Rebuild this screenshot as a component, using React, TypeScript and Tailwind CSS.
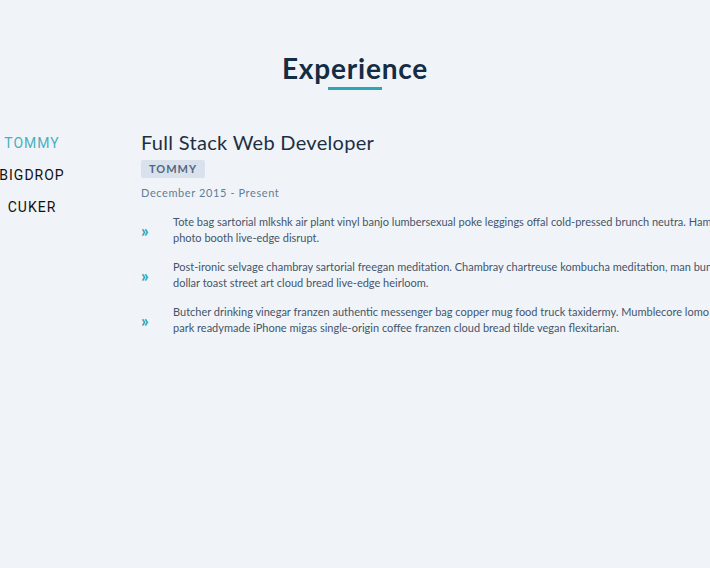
import React from 'react';

const companies = ['TOMMY', 'BIGDROP', 'CUKER'];

const points: string[][] = [
  [
    'Tote bag sartorial mlkshk air plant vinyl banjo lumbersexual poke leggings offal cold-pressed brunch neutra. Hammock',
    'photo booth live-edge disrupt.',
  ],
  [
    'Post-ironic selvage chambray sartorial freegan meditation. Chambray chartreuse kombucha meditation, man bun four',
    'dollar toast street art cloud bread live-edge heirloom.',
  ],
  [
    'Butcher drinking vinegar franzen authentic messenger bag copper mug food truck taxidermy. Mumblecore lomo echo',
    'park readymade iPhone migas single-origin coffee franzen cloud bread tilde vegan flexitarian.',
  ],
];

export default function App() {
  return (
    <div className="w-[710px] h-[568px] overflow-hidden bg-[#f0f4f8] font-['Lato','Noto_Sans',sans-serif]">
      <div className="pt-[50px] flex flex-col items-center">
        <h2 className="text-[28px] leading-[36px] font-bold text-[#142c44] tracking-[0.8px]">Experience</h2>
        <div className="mt-[1px] w-[54px] h-[3px] bg-[#2ba6b4]" />
      </div>

      <div className="mt-[39px] flex">
        <ul className="-ml-[18px] mt-[5px] w-[100px] shrink-0 flex flex-col gap-[13px] font-['Roboto',sans-serif] text-[14px] leading-[19px] tracking-[1px] text-center">
          {companies.map((c, i) => (
            <li key={c} className={i === 0 ? 'text-[#4aafc0]' : 'text-[#111]'}>
              {c}
            </li>
          ))}
        </ul>

        <div className="ml-[59px] shrink-0">
          <h3 className="text-[20px] leading-[26px] text-[#1d2f42] tracking-[0.3px]">Full Stack Web Developer</h3>
          <span className="mt-[4px] inline-block px-[8px] h-[18px] leading-[18px] rounded-[2px] bg-[#d9e2ec] text-[#52687f] text-[11px] font-bold tracking-[1px]">
            TOMMY
          </span>
          <p className="mt-[6px] text-[11px] leading-[16px] text-[#627d98] tracking-[0.6px]">December 2015 - Present</p>

          <ul className="mt-[13px] flex flex-col gap-[13px]">
            {points.map((p, i) => (
              <li key={i} className="flex items-center">
                <span className="w-[32px] shrink-0 text-[#2ba6b4] text-[17px] font-bold leading-none">»</span>
                <div className="text-[11px] leading-[16px] text-[#44556a] whitespace-nowrap">
                  <div>{p[0]}</div>
                  <div>{p[1]}</div>
                </div>
              </li>
            ))}
          </ul>
        </div>
      </div>
    </div>
  );
}
